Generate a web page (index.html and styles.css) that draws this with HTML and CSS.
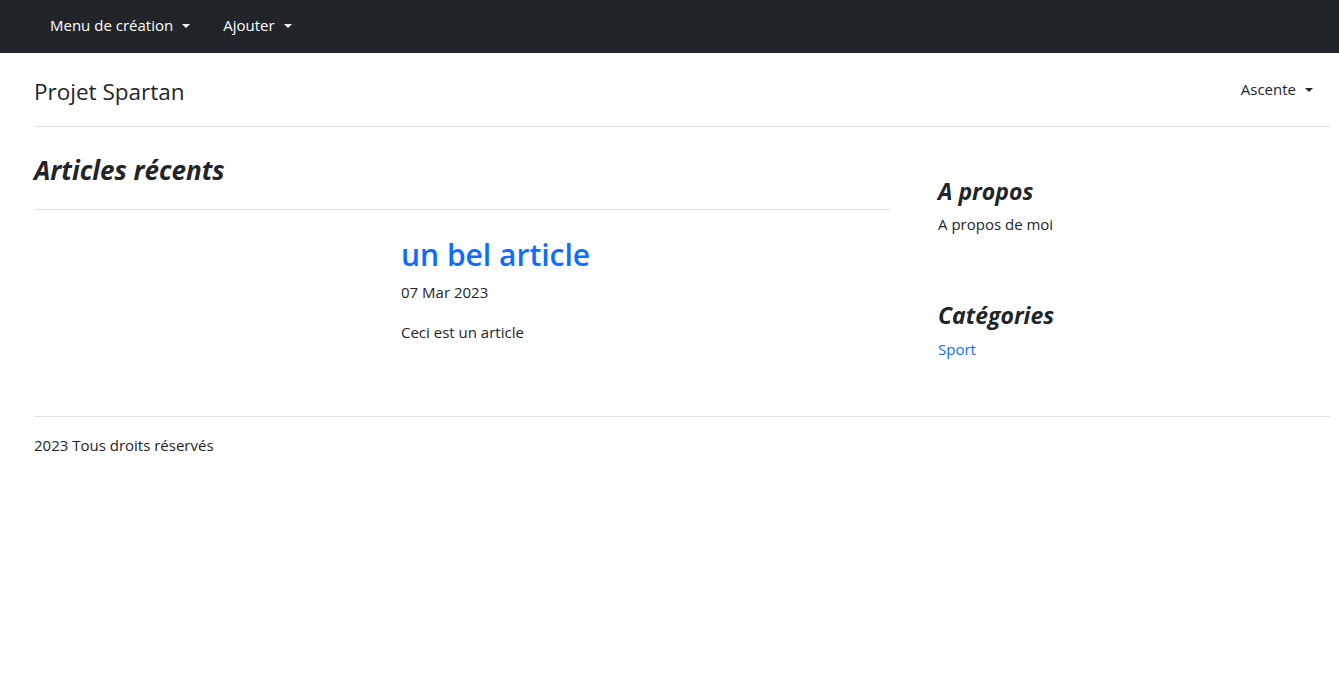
FILE: index.html
```html
<!DOCTYPE html>
<html lang="fr">
<head>
<meta charset="utf-8">
<title>Projet Spartan</title>
<link rel="stylesheet" href="styles.css">
</head>
<body>
<nav class="topbar">
  <ul class="topnav">
    <li><a class="toplink dropdown" href="#">Menu de création</a></li>
    <li><a class="toplink dropdown" href="#">Ajouter</a></li>
  </ul>
</nav>
<div class="page">
  <header class="masthead">
    <span class="brand">Projet Spartan</span>
    <a class="sort dropdown" href="#">Ascente</a>
  </header>
  <div class="layout">
    <main class="main">
      <h3 class="section-title">Articles récents</h3>
      <article class="post">
        <div class="post-media"></div>
        <div class="post-body">
          <h2 class="post-title"><a href="#">un bel article</a></h2>
          <p class="post-date">07 Mar 2023</p>
          <p class="post-text">Ceci est un article</p>
        </div>
      </article>
    </main>
    <aside class="sidebar">
      <section class="widget">
        <h4 class="widget-title">A propos</h4>
        <p class="widget-text">A propos de moi</p>
      </section>
      <section class="widget widget-cats">
        <h4 class="widget-title">Catégories</h4>
        <a class="widget-link" href="#">Sport</a>
      </section>
    </aside>
  </div>
  <footer class="footer">
    <p>2023 Tous droits réservés</p>
  </footer>
</div>
</body>
</html>
```
FILE: styles.css
```css
* { box-sizing: border-box; }
html, body { margin: 0; padding: 0; }
body {
  font-family: "Open Sans", "Noto Sans", sans-serif;
  font-size: 15px;
  line-height: 1.5;
  color: #212529;
  background: #fff;
}
a { text-decoration: none; }
.dropdown::after {
  content: "";
  display: inline-block;
  margin-left: 9px;
  vertical-align: 3px;
  border-top: 4px solid;
  border-right: 4px solid transparent;
  border-left: 4px solid transparent;
  border-bottom: 0;
}
.topbar {
  background: #212529;
  height: 53px;
  display: flex;
  align-items: center;
  padding-left: 42px;
  padding-bottom: 2px;
}
.topnav {
  list-style: none;
  margin: 0;
  padding: 0;
  display: flex;
}
.toplink {
  display: block;
  color: #fff;
  padding: 8px 8px;
  margin-right: 17px;
}
.page {
  padding: 0 9px 0 34px;
}
.masthead {
  height: 74px;
  display: flex;
  align-items: center;
  justify-content: space-between;
  border-bottom: 1px solid #dee2e6;
  padding-top: 4px;
}
.brand {
  font-size: 22.5px;
  font-weight: 400;
}
.sort {
  color: #212529;
  padding-right: 17px;
  margin-top: -4px;
}
.layout {
  display: flex;
  gap: 48px;
}
.main {
  width: 856px;
  flex: none;
}
.section-title {
  margin: 0;
  padding: 28px 0 23px;
  font-size: 26px;
  font-style: italic;
  font-weight: 700;
  line-height: 1.2;
  border-bottom: 1px solid #dee2e6;
}
.post {
  display: flex;
  padding-top: 27px;
  min-height: 206px;
}
.post-media {
  width: 367px;
  flex: none;
}
.post-title {
  margin: 0 0 8px;
  font-size: 30px;
  font-weight: 600;
  line-height: 1.2;
}
.post-title a { color: #0d6efd; }
.post-date {
  margin: 0 0 17px;
}
.post-text {
  margin: 0;
}
.sidebar {
  flex: 1;
  padding-top: 51px;
}
.widget-title {
  margin: 0 0 7px;
  font-size: 23px;
  font-style: italic;
  font-weight: 700;
  line-height: 1.2;
}
.widget-text { margin: 0; }
.widget-cats { margin-top: 67px; }
.widget-cats .widget-title { margin-bottom: 8px; }
.widget-link { color: #0d6efd; }
.footer {
  border-top: 1px solid #dee2e6;
  padding-top: 17px;
}
.footer p { margin: 0; }
```
